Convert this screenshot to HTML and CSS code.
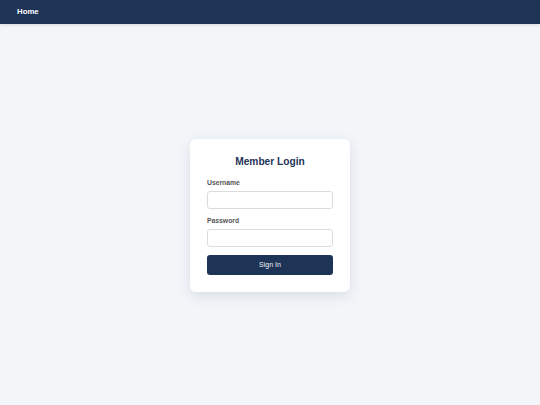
FILE: index.html
```html
<!DOCTYPE html>
<html lang="en">
<head>
<meta charset="utf-8">
<title>Member Login</title>
<link rel="stylesheet" href="styles.css">
</head>
<body>
<nav class="navbar"><a class="nav-link" href="#">Home</a></nav>
<main class="main">
  <form class="card">
    <h1 class="title">Member Login</h1>
    <label class="label" for="u">Username</label>
    <input class="input" id="u" type="text">
    <label class="label label-second" for="p">Password</label>
    <input class="input" id="p" type="password">
    <button class="button" type="button">Sign In</button>
  </form>
</main>
</body>
</html>
```

FILE: styles.css
```css
* { box-sizing: border-box; }
html, body { margin: 0; padding: 0; height: 100%; }
body {
  font-family: "Liberation Sans", Arial, sans-serif;
  background: #f3f6f9;
  display: flex;
  flex-direction: column;
}
.navbar {
  height: 24px;
  background: #1e3457;
  display: flex;
  align-items: center;
  padding: 0 17px;
  box-shadow: 0 1px 3px rgba(0,0,0,0.12);
}
.nav-link {
  color: #ffffff;
  font-weight: bold;
  font-size: 7.8px;
  text-decoration: none;
  line-height: 10px;
}
.main {
  flex: 1;
  display: flex;
  align-items: center;
  justify-content: center;
}
.card {
  width: 160px;
  background: #ffffff;
  border-radius: 6px;
  padding: 16px 17px 17px;
  box-shadow: 0 4px 14px rgba(30, 52, 87, 0.12);
  display: flex;
  flex-direction: column;
  margin-top: 1px;
}
.title {
  margin: 0 0 9px;
  font-size: 10.2px;
  line-height: 14px;
  text-align: center;
  color: #1e3457;
  font-weight: bold;
}
.label {
  font-size: 6.8px;
  line-height: 9px;
  font-weight: bold;
  color: #555555;
  margin-bottom: 4px;
}
.label-second { margin-top: 7px; }
.input {
  height: 18px;
  border: 1px solid #d9dde2;
  border-radius: 3px;
  background: #fff;
  width: 100%;
  margin: 0;
}
.button {
  margin-top: 8px;
  height: 20px;
  border: none;
  border-radius: 3px;
  background: #1e3457;
  color: #eef1f5;
  font-family: "Liberation Sans", Arial, sans-serif;
  font-weight: normal;
  font-size: 7px;
  width: 100%;
}
```
